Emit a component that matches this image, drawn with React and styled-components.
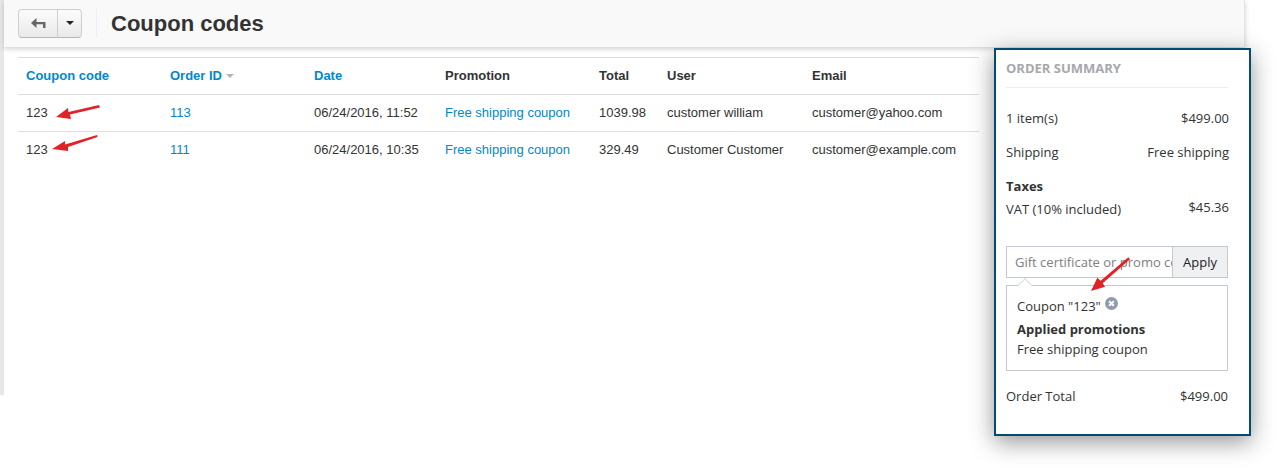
import React from 'react'
import styled, { createGlobalStyle } from 'styled-components'

const rows = [
  { coupon: '123', order: '113', date: '06/24/2016, 11:52', promotion: 'Free shipping coupon', total: '1039.98', user: 'customer william', email: 'customer@yahoo.com' },
  { coupon: '123', order: '111', date: '06/24/2016, 10:35', promotion: 'Free shipping coupon', total: '329.49', user: 'Customer Customer', email: 'customer@example.com' },
]

function RedArrow({ left, top, width, height, points }) {
  return (
    <ArrowSvg $left={left} $top={top} width={width} height={height} viewBox={`0 0 ${width} ${height}`}>
      <polygon points={points} fill="#e22226" />
    </ArrowSvg>
  )
}

export default function App() {
  return (
    <Page>
      <GlobalStyle />
      <Admin>
        <Header>
          <BackGroup>
            <BackButton aria-label="Back">
              <svg width="15" height="10" viewBox="0 0 15 10">
                <path d="M5.5 0 L0 5 L5.5 10 L5.5 6.3 L12 6.3 L12 10 L14.5 10 L14.5 3.9 L5.5 3.9 Z" fill="#666" />
              </svg>
            </BackButton>
            <CaretButton aria-label="More">
              <Caret />
            </CaretButton>
          </BackGroup>
          <Title>Coupon codes</Title>
        </Header>
        <Content>
          <Table>
            <colgroup>
              <col width="144" />
              <col width="144" />
              <col width="131" />
              <col width="154" />
              <col width="68" />
              <col width="145" />
              <col />
            </colgroup>
            <thead>
              <tr>
                <Th $link>Coupon code</Th>
                <Th $link>Order ID <SortCaret /></Th>
                <Th $link>Date</Th>
                <Th>Promotion</Th>
                <Th>Total</Th>
                <Th>User</Th>
                <Th>Email</Th>
              </tr>
            </thead>
            <tbody>
              {rows.map(row => (
                <tr key={row.order}>
                  <Td>{row.coupon}</Td>
                  <Td $link>{row.order}</Td>
                  <Td>{row.date}</Td>
                  <Td $link>{row.promotion}</Td>
                  <Td>{row.total}</Td>
                  <Td>{row.user}</Td>
                  <Td>{row.email}</Td>
                </tr>
              ))}
            </tbody>
          </Table>
        </Content>
      </Admin>

      <RedArrow left={55} top={104} width={46} height={16} points="1,13 13,4 13.5,8 44,1 45,3.5 15,10.5 16,15" />
      <RedArrow left={51} top={134} width={48} height={18} points="1,15 14,7 14,10.5 46,1 46.5,3 17,13 17,17" />

      <Summary>
        <SummaryTitle>ORDER SUMMARY</SummaryTitle>
        <SummaryRow $mt={21} $overhang>
          <span>1 item(s)</span>
          <span>$499.00</span>
        </SummaryRow>
        <SummaryRow $mt={16} $overhang>
          <span>Shipping</span>
          <span>Free shipping</span>
        </SummaryRow>
        <TaxesLabel>Taxes</TaxesLabel>
        <SummaryRow $mt={5} $overhang>
          <span>VAT (10% included)</span>
          <TaxAmount>$45.36</TaxAmount>
        </SummaryRow>
        <PromoForm>
          <PromoInput readOnly placeholder="Gift certificate or promo code" />
          <ApplyButton>Apply</ApplyButton>
        </PromoForm>
        <PromoBox>
          <CouponLine>
            Coupon "123"
            <RemoveIcon width="13" height="13" viewBox="0 0 13 13">
              <circle cx="6.5" cy="6.5" r="6.5" fill="#8f9cb0" />
              <path d="M4.2 4.2 L8.8 8.8 M8.8 4.2 L4.2 8.8" stroke="#fff" strokeWidth="2" />
            </RemoveIcon>
          </CouponLine>
          <PromoHeading>Applied promotions</PromoHeading>
          <PromoText>Free shipping coupon</PromoText>
        </PromoBox>
        <SummaryRow $mt={16}>
          <span>Order Total</span>
          <span>$499.00</span>
        </SummaryRow>
      </Summary>

      <RedArrow left={1090} top={256} width={41} height={36} points="1,35 7.3,21.7 10.7,24.7 38.3,1.3 40,3.3 12.7,27.3 15,30.7" />
    </Page>
  )
}

const GlobalStyle = createGlobalStyle`
  html, body {
    margin: 0;
    padding: 0;
    background: #fff;
  }
  body {
    font-family: "Liberation Sans", Arial, sans-serif;
    overflow: hidden;
  }
`

const Page = styled.div`
  position: relative;
  width: 1279px;
  height: 468px;
  overflow: hidden;
  background: #fff;
`

const Admin = styled.div`
  width: 1241px;
  height: 395px;
  border-left: 4px solid #e7e7e7;
  background: #fff;
`

const Header = styled.div`
  display: flex;
  align-items: center;
  box-sizing: border-box;
  height: 47px;
  padding: 0 0 1px 14px;
  background: #f9f9f9;
  border-right: 1px solid #e4e4e4;
  box-shadow: 0 2px 5px rgba(0, 0, 0, 0.18);
`

const BackGroup = styled.div`
  display: flex;
  height: 29px;
  padding-right: 14px;
  border-right: 1px solid #f0f0f0;
`

const BackButton = styled.div`
  display: flex;
  align-items: center;
  justify-content: center;
  box-sizing: border-box;
  width: 40px;
  height: 29px;
  border: 1px solid #cfcfcf;
  border-bottom-color: #b8b8b8;
  border-radius: 4px 0 0 4px;
  background: linear-gradient(#fcfcfc, #e9e9e9);
`

const CaretButton = styled(BackButton)`
  width: 25px;
  margin-left: -1px;
  border-radius: 0 4px 4px 0;
`

const Caret = styled.span`
  width: 0;
  height: 0;
  border-left: 4px solid transparent;
  border-right: 4px solid transparent;
  border-top: 4px solid #222;
`

const Title = styled.h1`
  margin: 0 0 0 14px;
  font-size: 22px;
  line-height: 29px;
  font-weight: 700;
  color: #333;
`

const Content = styled.div`
  padding: 10px 262px 0 14px;
`

const Table = styled.table`
  width: 961px;
  table-layout: fixed;
  border-collapse: collapse;
  border-top: 1px solid #ddd;
  font-size: 13px;
`

const Th = styled.th`
  box-sizing: border-box;
  height: 37px;
  padding: 0 0 2px 8px;
  border-bottom: 1px solid #ddd;
  text-align: left;
  font-weight: 700;
  white-space: nowrap;
  color: ${props => (props.$link ? '#0088cc' : '#333')};
`

const Td = styled.td`
  box-sizing: border-box;
  height: 37px;
  padding: 0 0 2px 8px;
  border-bottom: 1px solid #ddd;
  white-space: nowrap;
  color: ${props => (props.$link ? '#0088cc' : '#333')};

  tr:last-child & {
    border-bottom: none;
  }
`

const SortCaret = styled.span`
  display: inline-block;
  width: 0;
  height: 0;
  vertical-align: 2px;
  border-left: 4px solid transparent;
  border-right: 4px solid transparent;
  border-top: 4px solid #b3b3b3;
`

const ArrowSvg = styled.svg`
  position: absolute;
  left: ${props => props.$left}px;
  top: ${props => props.$top}px;
`

const Summary = styled.div`
  position: absolute;
  left: 994px;
  top: 48px;
  box-sizing: border-box;
  width: 257px;
  height: 388px;
  padding: 10px 21px 0 10px;
  background: #fff;
  border: 2px solid #004d71;
  box-shadow: 0 6px 22px rgba(0, 0, 0, 0.42);
  font-family: "Open Sans", sans-serif;
  font-size: 13px;
  color: #333;
`

const SummaryTitle = styled.div`
  padding: 0 0 11px 0;
  border-bottom: 1px solid #eee;
  font-size: 13px;
  line-height: 16px;
  font-weight: 700;
  color: #a6a8ab;
`

const SummaryRow = styled.div`
  display: flex;
  justify-content: space-between;
  margin-top: ${props => props.$mt}px;
  margin-right: ${props => (props.$overhang ? -1 : 0)}px;
  line-height: 18px;
`

const TaxesLabel = styled.div`
  margin-top: 16px;
  line-height: 18px;
  font-weight: 700;
`

const TaxAmount = styled.span`
  margin-top: -2px;
`

const PromoForm = styled.div`
  display: flex;
  height: 32px;
  margin-top: 28px;
  box-sizing: border-box;
  border: 1px solid #c4c8cf;
`

const PromoInput = styled.input`
  flex: 1;
  min-width: 0;
  box-sizing: border-box;
  padding: 0 0 0 8px;
  border: none;
  outline: none;
  background: #fff;
  font-family: "Open Sans", sans-serif;
  font-size: 13px;

  &::placeholder {
    color: #808080;
    opacity: 1;
  }
`

const ApplyButton = styled.div`
  display: flex;
  align-items: center;
  justify-content: center;
  width: 54px;
  border-left: 1px solid #c4c8cf;
  background: #eff0f2;
  color: #222;
`

const PromoBox = styled.div`
  position: relative;
  box-sizing: border-box;
  height: 86px;
  margin-top: 7px;
  padding: 10px 10px 0;
  border: 1px solid #c4c8cf;

  &::before {
    content: '';
    position: absolute;
    left: 13px;
    top: -6px;
    width: 9px;
    height: 9px;
    background: #fff;
    border-left: 1px solid #dcdfe3;
    border-top: 1px solid #dcdfe3;
    transform: rotate(45deg);
  }
`

const CouponLine = styled.div`
  line-height: 20px;
`

const RemoveIcon = styled.svg`
  margin-left: 4px;
  vertical-align: 1px;
`

const PromoHeading = styled.div`
  margin-top: 3px;
  line-height: 20px;
  font-weight: 700;
`

const PromoText = styled.div`
  line-height: 20px;
`
